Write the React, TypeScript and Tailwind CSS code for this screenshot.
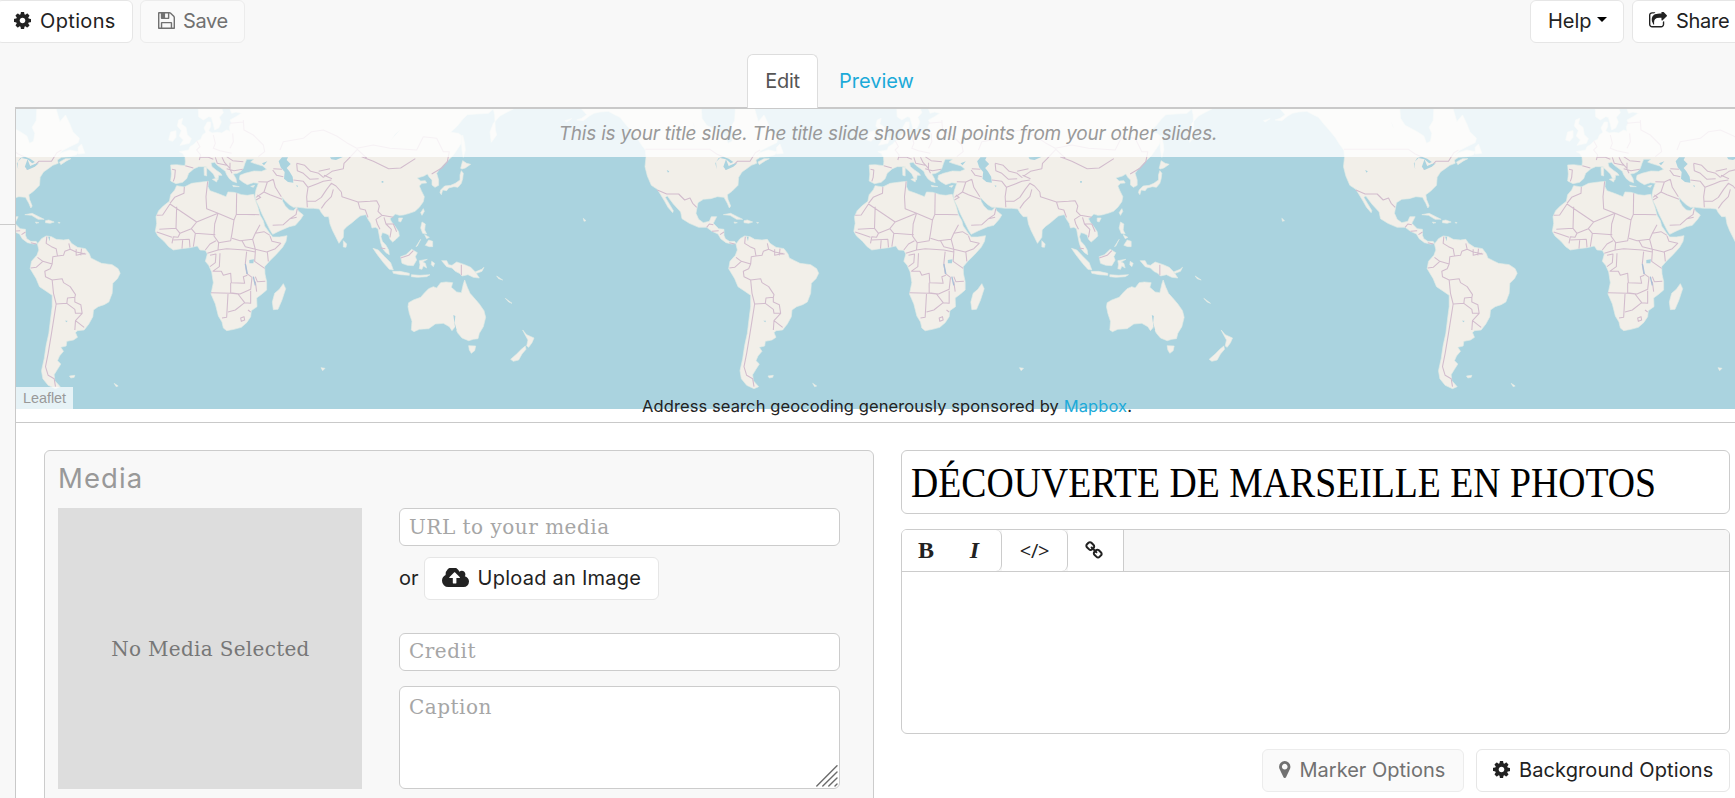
import type { ReactNode } from "react";

/* ---------- icons ---------- */

function Glyph({ d, viewBox, className }: { d: string; viewBox: string; className: string }) {
  return (
    <svg viewBox={viewBox} className={`shrink-0 fill-current ${className}`} aria-hidden="true">
      <path d={d} />
    </svg>
  );
}

const COG =
  "M1152 896q0-106-75-181t-181-75-181 75-75 181 75 181 181 75 181-75 75-181zm512-109v222q0 12-8 23t-20 13l-185 28q-19 54-39 91 35 50 107 138 10 12 10 25t-9 23q-27 37-99 108t-94 71q-12 0-26-9l-138-108q-44 23-91 38-16 136-29 186-7 28-36 28h-222q-14 0-24.5-8.5t-11.5-21.5l-28-184q-49-16-90-37l-141 107q-10 9-25 9-14 0-25-11-126-114-165-168-7-10-7-23 0-12 8-23 15-21 51-66.5t54-70.5q-27-50-41-99l-183-27q-13-2-21-12.5t-8-23.5v-222q0-12 8-23t19-13l186-28q14-46 39-92-40-57-107-138-10-12-10-24 0-10 9-23 26-36 98.5-107.5t94.5-71.5q13 0 26 10l138 107q44-23 91-38 16-136 29-186 7-28 36-28h222q14 0 24.5 8.5t11.5 21.5l28 184q49 16 90 37l142-107q9-9 24-9 13 0 25 10 129 119 165 170 7 8 7 22 0 12-8 23-15 21-51 66.5t-54 70.5q26 50 41 98l183 28q13 2 21 12.5t8 23.5z";
const FLOPPY =
  "M512 1536h768v-384h-768v384zm896 0h128v-896q0-14-10-38.5t-20-34.5l-281-281q-10-10-34-20t-39-10v416q0 40-28 68t-68 28h-576q-40 0-68-28t-28-68v-416h-128v1280h128v-416q0-40 28-68t68-28h832q40 0 68 28t28 68v416zm-384-928v-320q0-13-9.5-22.5t-22.5-9.5h-192q-13 0-22.5 9.5t-9.5 22.5v320q0 13 9.5 22.5t22.5 9.5h192q13 0 22.5-9.5t9.5-22.5zm640 32v928q0 40-28 68t-68 28h-1344q-40 0-68-28t-28-68v-1344q0-40 28-68t68-28h928q40 0 88 20t76 48l280 280q28 28 48 76t20 88z";
const SHARE =
  "M1472 989v259q0 119-84.5 203.5t-203.5 84.5h-832q-119 0-203.5-84.5t-84.5-203.5v-832q0-119 84.5-203.5t203.5-84.5h255q13 0 22.5 9.5t9.5 22.5q0 27-26 32-77 26-133 60-10 4-16 4h-112q-66 0-113 47t-47 113v832q0 66 47 113t113 47h832q66 0 113-47t47-113v-214q0-19 18-29 28-13 54-37 16-16 35-8 21 9 21 29zm237-496l-384 384q-18 19-45 19-12 0-25-5-39-17-39-59v-192h-160q-323 0-438 131-119 137-74 473 3 23-20 34-8 2-12 2-16 0-26-13-10-14-21-31t-39.5-68.5-49.5-99.5-38.5-114-17.5-122q0-49 3.5-91t14-90 28-88 47-81.5 68.5-74 94.5-61.5 124.5-48.5 159.5-30.5 196.5-11h160v-192q0-42 39-59 13-5 25-5 26 0 45 19l384 384q19 19 19 45t-19 45z";
const CLOUD =
  "M1216 864q0-14-9-23l-352-352q-9-9-23-9t-23 9l-351 351q-10 12-10 24 0 14 9 23t23 9h224v352q0 13 9.5 22.5t22.5 9.5h192q13 0 22.5-9.5t9.5-22.5v-352h224q13 0 22.5-9.5t9.5-22.5zm640 288q0 159-112.5 271.5t-271.5 112.5h-1088q-185 0-316.5-131.5t-131.5-316.5q0-130 70-240t188-165q-2-30-2-43 0-212 150-362t362-150q156 0 285.5 87t188.5 231q71-62 166-62 106 0 181 75t75 181q0 76-41 138 130 31 213.5 135.5t83.5 238.5z";
const PIN =
  "M1152 640q0-106-75-181t-181-75-181 75-75 181 75 181 181 75 181-75 75-181zm256 0q0 109-33 179l-364 774q-16 33-47.5 52t-67.5 19-67.5-19-46.5-52l-365-774q-33-70-33-179 0-212 150-362t362-150 362 150 150 362z";
const LINK =
  "M1520 1216q0-40-28-68l-208-208q-28-28-68-28-42 0-72 32 3 3 19 18.5t21.5 21.5 15 19 13 25.5 3.5 27.5q0 40-28 68t-68 28q-15 0-27.5-3.5t-25.5-13-19-15-21.5-21.5-18.5-19q-33 31-33 73 0 40 28 68l206 207q27 27 68 27 40 0 68-26l147-146q28-28 28-67zm-703-705q0-40-28-68l-206-207q-28-28-68-28-39 0-68 27l-147 146q-28 28-28 67 0 40 28 68l208 208q27 27 68 27 42 0 72-31-3-3-19-18.5t-21.5-21.5-15-19-13-25.5-3.5-27.5q0-40 28-68t68-28q15 0 27.5 3.5t25.5 13 19 15 21.5 21.5 18.5 19q33-31 33-73zm895 705q0 120-85 203l-147 146q-83 83-203 83-121 0-204-85l-206-207q-83-83-83-203 0-123 88-209l-88-88q-86 88-208 88-120 0-204-84l-208-208q-84-84-84-204t85-203l147-146q83-83 203-83 121 0 204 85l206 207q83 83 83 203 0 123-88 209l88 88q86-88 208-88 120 0 204 84l208 208q84 84 84 204z";

const FULL = "128 128 1536 1536";

/* ---------- world map ---------- */

const OLD_WORLD_LAND = [
  // Europe and Asia
  "M122 195L140 194L165 197L166 185L165 172L158 160L148 155L165 152L176 150L180 140L192 133L200 124L212 118L218 104L228 97L222 84L232 66L242 66L242 80L236 92L246 99L262 97L275 99L290 90L300 94L298 80L304 68L300 60L318 50L334 40L318 36L305 40L300 27L1090 27L1075 40L1040 42L1012 44L998 58L982 78L962 97L985 100L996 108L994 130L982 148L968 168L955 180L940 195L928 208L920 220L926 240L926 256L915 262L906 255L906 240L898 232L892 222L882 228L862 234L872 243L886 242L890 249L876 250L868 258L874 272L883 290L880 305L868 322L855 334L838 340L820 345L808 346L796 342L788 350L780 356L785 366L796 380L806 395L808 408L798 418L788 426L780 418L776 405L765 400L757 398L753 410L757 424L768 436L776 450L778 464L768 458L758 446L752 428L748 408L744 386L736 382L726 384L722 370L714 358L708 344L698 346L690 348L680 356L666 368L650 380L641 390L640 412L627 430L618 412L608 392L600 372L596 350L584 350L574 338L568 327L550 325L530 325L505 322L490 322L478 314L465 302L456 292L458 304L466 318L478 330L490 332L500 322L505 333L520 345L512 358L496 376L478 380L450 392L428 403L420 390L408 366L396 342L386 318L376 298L375 285L378 270L385 250L370 248L352 254L338 246L328 238L330 226L345 220L372 213L395 214L410 208L398 198L372 190L362 186L372 178L350 178L345 190L340 205L333 214L322 220L310 222L318 236L320 248L308 244L298 236L290 224L286 214L276 206L262 196L254 187L243 189L246 200L258 210L272 220L276 226L266 226L264 240L257 236L250 222L238 210L226 200L216 200L206 200L192 206L176 220L170 236L158 247L138 251L122 243L124 222Z",
  // Scandinavia
  "M205 27L206 50L220 60L236 50L244 52L250 72L254 90L266 84L274 66L268 52L280 38L276 27Z",
  // Great Britain and Ireland
  "M146 60L158 55L154 72L168 82L172 104L184 116L178 130L150 136L160 120L148 108L154 92L142 78Z",
  "M122 96L138 92L138 112L128 124L116 120Z",
  // Africa
  "M140 257L163 261L185 250L215 246L235 244L234 260L240 272L262 280L288 290L294 276L312 277L335 284L352 286L371 283L376 300L384 322L390 345L400 362L404 378L418 398L428 411L448 411L471 407L468 424L458 442L438 464L418 484L404 500L405 522L410 545L410 570L396 582L380 594L381 620L364 632L362 650L350 668L334 682L312 688L290 692L280 684L276 666L265 648L256 612L243 582L250 548L245 516L236 496L226 484L232 462L226 451L210 450L202 438L180 443L155 446L130 450L116 440L102 424L84 408L76 394L80 370L78 350L86 332L100 318L118 304L122 284L134 270Z",
  // Madagascar, Sri Lanka
  "M460 551L467 566L456 600L444 628L430 629L427 606L434 580L448 568Z",
  "M640 422L650 432L648 442L640 441Z",
  // Sumatra, Java, Borneo, Sulawesi, New Guinea
  "M729 445L745 450L764 470L782 488L790 510L778 508L762 490L742 464Z",
  "M788 514L810 514L838 520L838 526L812 524L790 520Z",
  "M844 524L870 526L900 524L890 530L862 532L844 530Z",
  "M812 470L828 464L845 448L862 458L856 470L860 480L850 497L832 496L816 490Z",
  "M868 482L892 478L878 486L886 490L890 504L880 498L876 508L868 506L870 494Z",
  "M935 482L950 482L956 494L966 496L980 486L1004 494L1022 502L1036 516L1048 534L1030 532L1014 524L996 528L988 520L976 514L966 504L950 500Z",
  "M1035 516L1055 508L1062 502L1056 514L1040 520Z",
  "M1100 528L1112 536L1118 540L1106 536Z",
  "M1126 595L1146 610L1136 606Z",
  "M905 484L914 490L910 500L904 494Z",
  // Philippines, Taiwan, Hainan
  "M876 366L886 372L884 390L890 402L878 400L872 384Z",
  "M896 420L908 424L908 440L898 440L886 436Z",
  "M884 404L898 412L890 416Z",
  "M880 326L883 334L876 346L872 338Z",
  "M806 354L818 354L812 366L806 364Z",
  "M872 418L862 438L858 440Z",
  // Japan, Sakhalin, Kamchatka
  "M932 270L944 258L962 256L976 250L990 240L990 225L994 212L1000 220L998 236L994 250L984 262L972 260L956 264L950 272L938 270L934 284L930 278Z",
  "M992 205L998 182L1010 190L1022 193L1006 204L996 207Z",
  "M998 105L1004 130L1006 150L1000 172L996 150L994 120Z",
  "M1084 127L1080 96L1090 70L1110 48L1132 36L1150 27L1090 27L1094 44L1096 90L1100 105Z",
  // Australia and Tasmania
  "M836 608L850 600L872 592L884 578L896 566L910 560L920 564L932 548L948 546L968 548L964 562L980 576L994 578L1000 552L1004 540L1012 562L1020 580L1036 598L1048 612L1062 632L1067 652L1060 680L1048 700L1044 716L1030 718L1016 722L996 714L984 700L974 682L966 692L958 680L940 670L916 672L896 686L868 688L852 695L844 690L846 664L838 640L834 620Z",
  "M1016 737L1037 738L1034 752L1024 760L1018 750Z",
  // New Zealand
  "M1178 690L1190 704L1212 714L1206 728L1196 742L1190 738L1194 720L1184 702Z",
  "M1186 738L1188 748L1176 762L1166 780L1150 784L1142 778L1160 762L1174 748Z",
  // Mediterranean islands
  "M222 202L230 200L230 228L223 226Z",
  "M247 238L263 234L260 246Z",
  "M308 256L328 260L310 260Z",
  "M362 259L374 256L370 262Z",
  // Kerguelen
  "M573 803L585 805L578 812Z",
];

const OLD_WORLD_WATER = [
  "M456 172L446 184L452 202L464 216L462 236L474 246L490 248L488 230L478 214L470 204L482 192L470 180L474 172Z",
  "M396 190L412 184L402 196Z",
  "M600 172L640 170L618 180L604 178Z",
  "M358 480L372 478L370 490L358 490Z",
  "M810 90L790 112L782 122L796 102Z",
  "M755 243L760 243L760 248L755 248Z",
  "M498 256L504 257L502 262Z",
  "M970 645L976 648L974 668L980 690L972 700L975 680Z",
];

const OLD_WORLD_BORDERS = [
  "M126 208L136 210L134 232L130 244M166 197L190 204M200 122L210 140L200 150L212 165L208 180M212 172L235 172L250 178M250 105L256 130L250 145L270 152L305 160M308 100L310 125L300 145M340 60L342 90L370 105L400 135L404 155L385 170M300 70L340 66M256 172L262 190L290 196M276 172L284 188L300 205M290 170L308 182L340 185M290 206L312 212L338 208M300 188L300 208L306 220",
  "M163 261L162 280L134 292L120 310M120 312L98 345L80 346M120 312L200 366L264 340M140 320L138 385L88 388M233 244L228 290L230 326L264 340M320 280L319 343M319 343L388 344M319 343L312 360M264 340L312 360L306 400L302 422L266 428L252 408L254 372L264 340M200 366L184 386L150 400L138 385M150 400L144 412L130 410L126 430M184 386L196 400L256 404M196 400L190 440M130 420L178 418L180 442M158 420L156 446M80 396L98 402L126 412M306 415L330 422L368 418L376 400L390 374M376 400L402 395L420 406M420 408L426 424L452 430L436 446L410 456L376 448L368 418M336 422L346 440L376 448M226 450L240 432L258 422M266 428L264 450L232 460M264 450L290 446L346 450L376 456L376 448M412 456L415 484M376 456L374 484L404 505M350 455L346 490L350 520L366 532M240 466L258 462L256 488L240 500M270 460L268 500L248 514M248 514L274 514L280 526L302 520L304 548L344 550L340 530L352 526M302 548L302 578L330 582L362 568L366 532M376 530L382 545L406 544M376 545L380 575M243 578L302 580L324 582M294 582L290 652L276 654M294 636L316 630L344 608L324 582M344 608L362 610L362 572M354 630L362 636M332 654L342 650L344 660L334 664Z",
  "M385 245L412 246L430 238M412 246L402 276L378 292M402 276L420 284L456 298M430 238L436 262L454 290M378 300L392 292L382 285M428 376L460 374L480 356L500 352M480 356L498 344L502 326M428 210L440 226L460 230M430 206L456 208M490 240L520 244L534 262L530 290L532 322M534 262L560 252L580 244L604 240M532 304L556 304L574 292L590 268L604 250L618 258L634 276M574 325L586 308L604 290L610 268M634 276L636 290L684 306L720 304M684 306L690 326L706 330L714 352M720 304L740 302L748 318L744 334L756 346M756 346L738 358L742 372L750 388M756 346L790 352M762 352L768 372L790 372L800 395M768 372L784 388L780 412M500 190L524 196L542 214L566 220L580 232M500 190L502 212L520 220L540 238L566 236M580 232L606 214L640 206L642 190L656 176M566 214L600 206M606 236L582 226M450 150L460 125L520 115L545 95L580 90L620 108L650 128L680 145L730 135L780 145L860 150L880 110L920 115L940 155L958 155L952 185L934 205L905 222M695 170L730 184L776 206L812 204L856 176M656 176L682 148L710 174",
  "M994 494L994 526M812 474L836 466L850 452M752 444L766 446",
];

const NEW_WORLD_LAND = [
  // North and Central America
  "M425 27L440 44L425 55L410 60L430 62L448 48L462 40L480 36L505 34L524 44L540 52L556 72L572 90L590 112L604 134L616 150L618 172L615 200L622 228L634 256L652 268L662 284L674 304L684 322L698 338L700 332L688 312L676 292L682 288L700 312L722 336L726 356L748 370L776 382L800 382L816 394L834 402L842 416L858 428L876 432L888 430L884 424L868 424L856 416L852 406L852 388L836 386L828 378L820 370L830 350L814 350L808 364L790 368L776 358L768 340L774 308L790 298L812 296L832 290L852 292L862 310L868 324L872 318L864 298L862 284L876 274L894 256L896 232L906 216L920 206L934 196L950 190L948 180L960 172L985 170L1005 164L1010 155L985 150L960 158L950 168L962 152L985 140L1010 128L1014 115L994 95L985 72L972 45L955 65L944 27L886 27L884 62L872 82L880 100L876 124L864 130L856 108L836 95L800 76L786 55L784 27Z",
  "M1010 142L1020 132L1030 160L1010 162Z",
  "M954 186L972 176L988 176L976 182L958 194Z",
  "M850 344L872 340L892 350L908 358L890 358L870 346Z",
  "M912 362L922 360L938 366L926 370L912 368Z",
  "M882 366L892 368L884 370Z",
  "M950 367L956 368L952 370Z",
  "M430 355L438 362L432 364Z",
  "M375 62L395 56L380 66Z",
  // South America
  "M888 432L900 416L914 408L930 410L944 418L966 420L982 418L990 430L1008 442L1032 446L1044 462L1048 474L1064 482L1080 490L1112 494L1130 506L1136 520L1128 536L1114 550L1112 580L1102 606L1088 614L1070 620L1056 630L1054 650L1042 672L1028 690L1008 692L1002 698L1008 712L996 720L976 724L974 738L958 742L966 754L954 768L948 782L958 792L948 808L938 824L940 842L956 860L942 866L920 856L904 836L900 812L908 776L914 736L922 700L928 650L932 620L932 586L912 572L894 560L884 536L866 506L870 484L886 466L892 450Z",
  "M984 828L1000 826L998 832L988 834Z",
  "M1118 850L1130 858L1124 860Z",
];

const NEW_WORLD_WATER = [
  "M830 208L828 186L840 174L858 178L872 190L880 186L866 176L850 170L836 174L826 190ZM858 178L850 200L858 210L880 200L892 190L880 192L866 198Z",
  "M680 210L688 214L684 218Z",
  "M920 410L926 410L924 424Z",
  "M970 662L978 662L976 667Z",
  "M758 65L766 85L762 78Z",
];

const NEW_WORLD_BORDERS = [
  "M616 148L810 148L830 162L852 172M855 208L880 196L892 184L930 184L946 158L960 150M652 270L680 282L716 282L734 300L750 294L758 310L770 322M800 382L808 372L820 374M816 394L836 392M840 404L852 396",
  "M916 410L914 430L930 440L944 446L948 468L966 466L970 454L986 448L982 430M986 448L1004 456L1034 462M1004 448L1004 466L1030 460M1020 446L1018 466M888 472L904 484L932 492L934 470L948 468M868 504L884 502L904 484M932 492L926 506L910 514L912 530L932 540L962 536L966 548L986 560L1002 584L1000 592L978 594L976 610L944 612L936 580L932 540M944 612L938 650L930 700L920 760L912 800L920 826L938 836L942 860M976 610L1000 628L1002 640L1022 640L1018 614L1000 606L1000 592M1022 640L1002 662L1000 690M1002 662L1028 682M868 428L884 432",
];

function Region({ land, water, borders }: { land: string[]; water: string[]; borders: string[] }) {
  return (
    <>
      <path d={land.join("")} fill="#f2efe9" stroke="#e3ebe6" strokeWidth="2" strokeLinejoin="round" />
      <path d={borders.join("")} fill="none" stroke="#d2bccd" strokeWidth="3.2" strokeLinejoin="round" />
      <path d={water.join("")} fill="#aad3df" />
    </>
  );
}

const WORLD_OFFSETS = [-698.5, 0, 698.5, 1397];

function WorldMap() {
  return (
    <svg viewBox="16 109 1719 300" className="block h-[300px] w-[1719px]" role="img" aria-label="World map">
      <defs>
        <g id="world">
          <g transform="translate(130 100) scale(0.33333)">
            <Region land={OLD_WORLD_LAND} water={OLD_WORLD_WATER} borders={OLD_WORLD_BORDERS} />
            <path d="M346 492L352 522M370 530L376 556" stroke="#a9bfd8" strokeWidth="4" fill="none" />
          </g>
          <g transform="translate(440 100) scale(0.33333)">
            <Region land={NEW_WORLD_LAND} water={NEW_WORLD_WATER} borders={NEW_WORLD_BORDERS} />
          </g>
        </g>
      </defs>
      <rect x="16" y="109" width="1719" height="300" fill="#aad3df" />
      {WORLD_OFFSETS.map((x) => (
        <use key={x} href="#world" x={x} />
      ))}
    </svg>
  );
}

/* ---------- controls ---------- */

function Button({ children, muted = false, className = "" }: { children: ReactNode; muted?: boolean; className?: string }) {
  const tone = muted ? "border-[#ececec] bg-[#fafafa] text-[#717171]" : "border-[#e6e6e6] bg-white text-[#222]";
  return (
    <button
      type="button"
      className={`flex h-[43px] shrink-0 items-center rounded-md border pb-[2px] text-[20px] leading-none whitespace-nowrap ${tone} ${className}`}
    >
      {children}
    </button>
  );
}

const FIELD =
  "block w-full rounded-md border border-[#ccc] bg-white px-[9px] font-['DejaVu_Serif',serif] text-[20px] tracking-[0.5px] text-[#222] outline-none placeholder:text-[#a6a6a6] placeholder:opacity-100";

function Toolbar() {
  return (
    <div className="flex h-[42px] border-b border-[#ccc] bg-[#f7f7f7]">
      <div className="flex h-full w-[100px] items-center rounded-r-md border-r border-[#ccc] bg-white font-['Liberation_Serif',serif] text-[24px] leading-none font-bold text-[#222]">
        <button type="button" className="w-[48px] pb-px text-center">B</button>
        <button type="button" className="w-[49px] pb-px text-center italic">I</button>
      </div>
      <button
        type="button"
        className="h-full w-[66px] rounded-r-md border-r border-[#ccc] bg-white text-center font-['Open_Sans',sans-serif] text-[20px] leading-none tracking-[-0.2px] text-[#222]"
      >
        &lt;/&gt;
      </button>
      <button type="button" className="flex h-full w-[56px] items-center justify-center border-r border-[#ccc] bg-white pr-[4px] pb-px text-[#222]">
        <Glyph d={LINK} viewBox="64 0 1664 1792" className="h-[19px] w-[18px]" />
      </button>
    </div>
  );
}

export default function App() {
  return (
    <div className="flex h-[798px] w-[1735px] flex-col overflow-hidden bg-[#f8f8f8] font-['Inter',sans-serif] text-[#222]">
      <header className="flex h-[54px] shrink-0 items-start">
        <Button className="-ml-1 w-[137px] pl-[17px]">
          <Glyph d={COG} viewBox={FULL} className="mr-[9px] h-[17px] w-[17px]" />
          <span className="tracking-[0.35px]">Options</span>
        </Button>
        <Button muted className="ml-[7px] w-[105px] pl-[17px]">
          <Glyph d={FLOPPY} viewBox={FULL} className="mr-[8px] h-[17px] w-[17px]" />
          <span className="tracking-[-0.4px]">Save</span>
        </Button>
        <Button className="ml-auto w-[94px] pl-[17px]">
          Help
          <span className="mb-[2px] ml-[5px] border-x-[5px] border-t-[5px] border-x-transparent border-t-black" />
        </Button>
        <Button className="-mr-2.5 ml-[8px] w-[113px] pl-[16px]">
          <Glyph d={SHARE} viewBox="64 128 1664 1536" className="mr-[9px] h-[17px] w-[18px]" />
          <span className="tracking-[-0.3px]">Share</span>
        </Button>
      </header>

      <div className="flex min-h-0 grow">
        <aside className="w-[15px] shrink-0 pt-[170px]">
          <div className="h-px bg-[#ccc]" />
        </aside>

        <main className="flex w-[1720px] shrink-0 flex-col">
          <nav className="z-10 -mb-px flex h-[54px] shrink-0 text-[20px] leading-none">
            <button type="button" className="ml-[732px] w-[71px] rounded-t-md border border-b-0 border-[#ddd] bg-white pb-[1px] text-center tracking-[-0.3px] text-[#555]">
              Edit
            </button>
            <button type="button" className="ml-[21px] text-[#1caad9]">Preview</button>
          </nav>

          <div className="flex grow flex-col border-t-2 border-l border-[#c9c9c9] bg-white">
            <section className="relative h-[313px] shrink-0">
              <WorldMap />
              <p className="absolute inset-x-0 top-0 flex h-12 items-center justify-center bg-white/80 pt-[2px] pl-[25px] text-[19px] tracking-[-0.22px] text-[#999] italic">
                This is your title slide. The title slide shows all points from your other slides.
              </p>
              <span className="absolute top-[278px] left-0 flex h-[22px] w-[57px] items-center justify-center bg-white/70 pt-px font-['Liberation_Sans',sans-serif] text-[14.4px] text-[#999]">
                Leaflet
              </span>
              <p className="absolute top-[287px] left-[626px] text-[16.5px] leading-5 tracking-[0.1px] whitespace-nowrap text-[#222]">
                Address search geocoding generously sponsored by <a className="text-[#1caad9]">Mapbox</a>.
              </p>
            </section>

            <section className="flex grow items-start border-t border-[#c9c9c9] pt-[27px] pl-[28px]">
              <div className="h-[380px] w-[830px] shrink-0 rounded-md border border-[#ccc] bg-[#f8f8f8] pr-[33px] pl-[13px]">
                <h2 className="h-[57px] pt-[9px] text-[27.5px] leading-9 tracking-[1.1px] text-[#999]">Media</h2>
                <div className="flex justify-between">
                  <div className="flex h-[281px] w-[304px] items-center justify-center bg-[#ddd] pl-px font-['DejaVu_Serif',serif] text-[20px] tracking-[0.3px] text-[#777]">
                    No Media Selected
                  </div>
                  <form className="w-[441px]">
                    <input className={`h-[38px] ${FIELD}`} placeholder="URL to your media" />
                    <div className="mt-[11px] flex items-center text-[20px]">
                      <span className="pr-[5px] pb-[2px]">or</span>
                      <Button className="w-[235px] pl-[17px]">
                        <Glyph d={CLOUD} viewBox="-64 256 1920 1280" className="mr-[9px] h-[20px] w-[27px]" />
                        <span className="tracking-[0.25px]">Upload an Image</span>
                      </Button>
                    </div>
                    <input className={`mt-[33px] h-[38px] pb-[2px] ${FIELD}`} placeholder="Credit" />
                    <div className="relative mt-[15px]">
                      <textarea className={`h-[103px] resize-none pt-[5px] ${FIELD}`} placeholder="Caption" />
                      <svg viewBox="0 0 22 22" className="absolute right-[2px] bottom-[2px] h-[22px] w-[22px]" fill="none" stroke="#6b6b6b" strokeWidth="1.4" strokeLinecap="round">
                        <path d="M0.8 21L21 0.8M6.8 21L21 7M12.8 21L21 13M19 21L21 19" />
                      </svg>
                    </div>
                  </form>
                </div>
              </div>

              <div className="ml-[27px] w-[829px] shrink-0">
                <div className="flex h-[64px] items-center rounded-md border border-[#ccc] bg-white pt-[2px] pl-[9px]">
                  <h1 className="origin-left scale-x-[0.898] font-['Liberation_Serif',serif] text-[42px] leading-none whitespace-nowrap text-black">
                    DÉCOUVERTE DE MARSEILLE EN PHOTOS
                  </h1>
                </div>
                <div className="mt-[15px] h-[205px] overflow-hidden rounded-md border border-[#ccc] bg-white">
                  <Toolbar />
                </div>
                <div className="mt-[15px] flex justify-end gap-3">
                  <Button muted className="w-[202px] pl-[16px]">
                    <Glyph d={PIN} viewBox="384 128 1024 1536" className="mr-[9px] h-[17px] w-[11.5px]" />
                    Marker Options
                  </Button>
                  <Button className="w-[254px] pl-[16px]">
                    <Glyph d={COG} viewBox={FULL} className="mr-[9px] h-[17px] w-[17px]" />
                    <span className="tracking-[0.1px]">Background Options</span>
                  </Button>
                </div>
              </div>
            </section>
          </div>
        </main>
      </div>
    </div>
  );
}
